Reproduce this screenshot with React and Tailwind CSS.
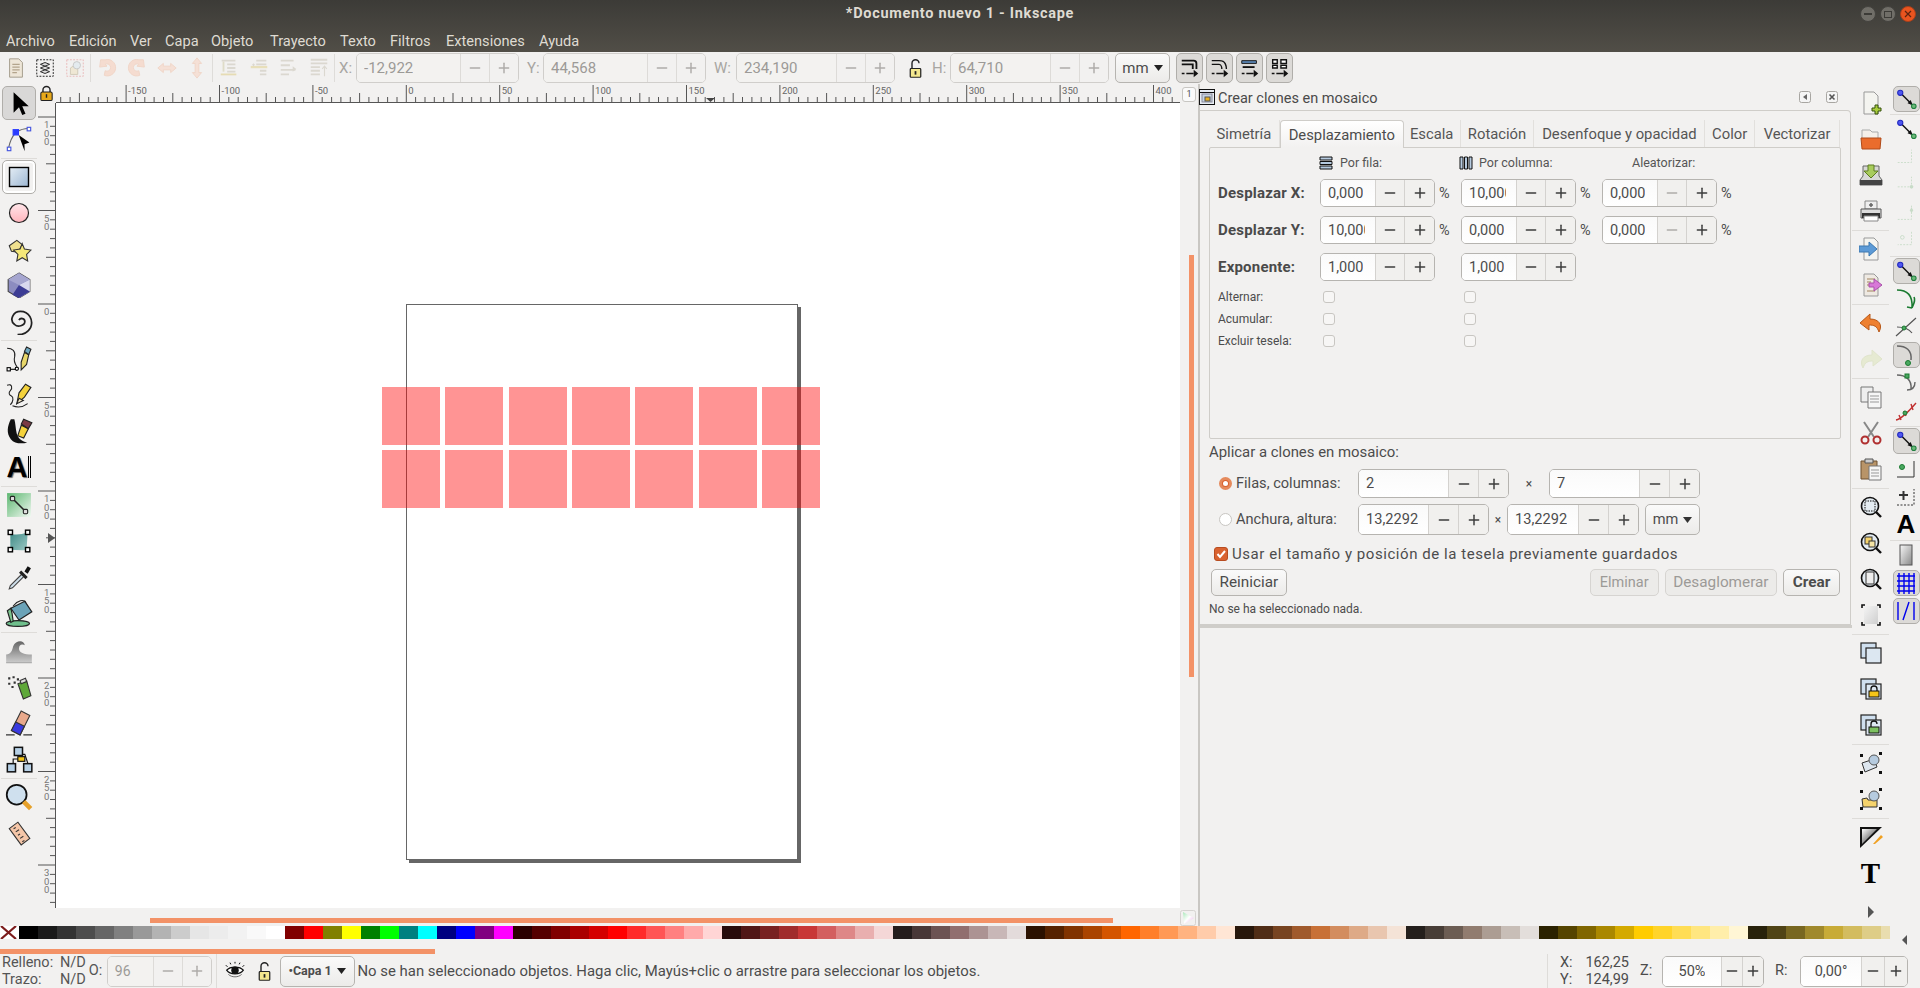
import { Minus, Plus } from "lucide-react";

const I = ({ s = 24, className = "", children }) => (
  <svg width={s} height={s} viewBox="0 0 24 24" className={className}>
    {children}
  </svg>
);

const Grad = ({ id, from, to, x2 = 1, y2 = 1 }) => (
  <defs>
    <linearGradient id={id} x1="0" y1="0" x2={x2} y2={y2}>
      <stop offset="0" stopColor={from} />
      <stop offset="1" stopColor={to} />
    </linearGradient>
  </defs>
);

const MENU = [
  ["Archivo", "w-[63px]"],
  ["Edición", "w-[61px]"],
  ["Ver", "w-[35px]"],
  ["Capa", "w-[46px]"],
  ["Objeto", "w-[59px]"],
  ["Trayecto", "w-[70px]"],
  ["Texto", "w-[50px]"],
  ["Filtros", "w-[56px]"],
  ["Extensiones", "w-[93px]"],
  ["Ayuda", "w-[50px]"],
];

const PALETTE = [
  "#000000", "#1a1a1a", "#333333", "#4d4d4d", "#666666", "#808080", "#999999", "#b3b3b3", "#cccccc", "#e6e6e6", "#ececec", "#f2f2f2", "#f9f9f9", "#ffffff",
  "#800000", "#ff0000", "#808000", "#ffff00", "#008000", "#00ff00", "#008080", "#00ffff", "#000080", "#0000ff", "#800080", "#ff00ff",
  "#2b0000", "#550000", "#800000", "#aa0000", "#d40000", "#ff0000", "#ff2a2a", "#ff5555", "#ff8080", "#ffaaaa", "#ffd5d5",
  "#280b0b", "#501616", "#782121", "#a02c2c", "#c83737", "#d35f5f", "#de8787", "#e9afaf", "#f4d7d7",
  "#241c1c", "#483737", "#6c5353", "#916f6f", "#ac9393", "#c8b7b7", "#e3dbdb",
  "#2b1100", "#552200", "#803300", "#aa4400", "#d45500", "#ff6600", "#ff7f2a", "#ff9955", "#ffb380", "#ffccaa", "#ffe6d5",
  "#28170b", "#502d16", "#784421", "#a05a2c", "#c87137", "#d38d5f", "#deaa87", "#e9c6af", "#f4e3d7",
  "#241f1c", "#483e37", "#6c5d53", "#917c6f", "#ac9d93", "#c8beb7", "#e3dedb",
  "#2b2200", "#554400", "#806600", "#aa8800", "#d4aa00", "#ffcc00", "#ffd42a", "#ffdd55", "#ffe680", "#ffeeaa", "#fff6d5",
  "#28220b", "#504416", "#786721", "#a0892c", "#c8ab37", "#d3bc5f", "#decd87", "#e9ddaf",
];

/* ---------- iconos de la barra superior ---------- */
const DocIcon = () => (
  <I s={22}>
    <path d="M5 2h10l4 4v16H5z" fill="#eee6d8" stroke="#a09888" />
    <path d="M8 8h8M8 11h8M8 14h8M8 17h5" stroke="#b3a48c" strokeWidth="1.5" />
  </I>
);
const SelectAllIcon = () => (
  <I s={22}>
    <rect x="3" y="3" width="18" height="18" fill="none" stroke="#111" strokeDasharray="2 1.5" />
    <path d="M7 8l5-2 5 2-5 2zM7 12l5-2 5 2-5 2zM7 16l5-2 5 2-5 2z" fill="#ddd" stroke="#222" strokeWidth="1" />
  </I>
);
const DimSelectIcon = () => (
  <I s={22}>
    <rect x="3" y="3" width="18" height="18" fill="none" stroke="#e9b7b7" strokeDasharray="2 1.5" />
    <path d="M7 19v-7l3-2h5v9z" fill="#efe7d4" stroke="#cfc8b6" />
    <circle cx="14" cy="9" r="4" fill="#e4ebef" stroke="#c6c6c6" />
  </I>
);
const RotLeft = ({ flip }) => (
  <I s={22} className={flip ? "-scale-x-100" : ""}>
    <path d="M10 3a9 9 0 1 1-1 17l1-5a4 4 0 1 0 0-7l2 2-8 1 1-8z" fill="#f5dcd0" stroke="#f0d4c6" />
  </I>
);
const FlipH = () => (
  <I s={22}>
    <path d="M2 12l6-5v3h8V7l6 5-6 5v-3H8v3z" fill="#f5e0d6" stroke="#f0d4c6" />
  </I>
);
const FlipV = () => (
  <I s={22}>
    <path d="M12 1l5 6h-3v10h3l-5 6-5-6h3V7H7z" fill="#f5e0d6" stroke="#f0d4c6" />
  </I>
);
const AlignA = () => (
  <I s={22}>
    <path d="M4 4h15M10 8h9M10 12h9M10 16h9" stroke="#dbd8d0" strokeWidth="2" />
    <path d="M6 5v11" stroke="#dfdcc8" strokeWidth="2" />
    <path d="M3 19h17" stroke="#e6dcb4" strokeWidth="2" />
  </I>
);
const AlignB = () => (
  <I s={22}>
    <path d="M9 4h11M9 8h11M13 15h7M13 19h7" stroke="#dbd8d0" strokeWidth="2" />
    <path d="M3 11h18" stroke="#e8dfba" strokeWidth="2.5" />
    <path d="M6 7v3M4.5 8.5h3" stroke="#dbd8d0" strokeWidth="1.2" />
  </I>
);
const AlignC = () => (
  <I s={22}>
    <path d="M3 4h14M3 9h10M3 14h16M3 19h9" stroke="#dbd8d0" strokeWidth="2" />
    <path d="M16 10l4 3-4 3z" fill="#dbd8d0" />
  </I>
);
const AlignD = () => (
  <I s={22}>
    <path d="M3 3h18M3 7h18M3 11h10M3 15h10M3 19h10" stroke="#dbd8d0" strokeWidth="2" />
    <path d="M18 21V10M15.5 13l2.5-3 2.5 3" stroke="#dbd8d0" strokeWidth="1.2" fill="none" />
  </I>
);
const LockClosed = ({ s = 20 }) => (
  <I s={s}>
    <path d="M7 11V7a5 5 0 0 1 10 0v4" fill="none" stroke="#222" strokeWidth="2" />
    <rect x="4" y="10" width="16" height="12" rx="2" fill="#e8a91a" stroke="#222" strokeWidth="1.5" />
    <rect x="11" y="13" width="2" height="5" fill="#222" />
  </I>
);
const LockOpen = ({ s = 20 }) => (
  <I s={s}>
    <path d="M8 12V6a4 4 0 0 1 8 0" fill="none" stroke="#222" strokeWidth="1.6" />
    <rect x="6" y="12" width="12" height="10" rx="1" fill="#f4e88e" stroke="#222" strokeWidth="1.4" />
    <rect x="11" y="15" width="2" height="4" fill="#222" />
  </I>
);
const SnapTop = ({ n }) => (
  <I s={22}>
    {n === 0 && <path d="M3 4h13a3 3 0 0 1 3 3v6M3 8h12v5" fill="none" stroke="#111" strokeWidth="2" />}
    {n === 1 && <path d="M3 4h8c6 0 6 2 7 4s1 3 1 5M3 8h8c2 0 3 3 3 5" fill="none" stroke="#111" strokeWidth="1.5" />}
    {n === 2 && (
      <>
        <path d="M3 4h16v3H3z" fill="#5b86b5" stroke="#111" strokeWidth="1" />
        <path d="M4 11h13" stroke="#111" strokeWidth="2" />
      </>
    )}
    {n === 3 && <path d="M4 3h5v4H4zM13 3h6v4h-6zM4 9h5v3H4zM13 9h6v3h-6z" fill="#fff" stroke="#111" strokeWidth="1.5" />}
    <path d="M3 18h3M8 18h8" stroke="#111" strokeWidth="1.5" />
    <path d="M16 14l5 4-5 4z" fill="#111" />
  </I>
);

/* ---------- herramientas (izquierda) ---------- */
const TOOLS = [
  [
    <I key="sel" s={26}><path d="M7 2v19l5-5 3 7 3-1-3-7h6z" fill="#000" /></I>,
    <I key="node" s={28}>
      <path d="M9 7C6 10 4 15 3 20M10 6c3-2 7-3 10-3" fill="none" stroke="#666" strokeWidth="1" />
      <rect x="7" y="4" width="4.5" height="4.5" fill="#2a3cff" stroke="#2a3cff" />
      <rect x="2" y="19" width="3" height="3" fill="#fff" stroke="#4858e0" />
      <rect x="19" y="2" width="3" height="3" fill="#fff" stroke="#4858e0" />
      <path d="M11 9l10 5-4 2 1 6z" transform="rotate(8 14 14)" fill="#000" />
    </I>,
  ],
  [
    <I key="rect" s={24}>
      <Grad id="gRect" from="#e4edf5" to="#9db7d2" />
      <rect x="2.5" y="2.5" width="19" height="19" fill="url(#gRect)" stroke="#000" strokeWidth="1.4" />
    </I>,
    <I key="circ" s={24}>
      <Grad id="gCirc" from="#ffe6ea" to="#ffb4bc" x2="0" />
      <circle cx="12" cy="12" r="9.5" fill="url(#gCirc)" stroke="#222" strokeWidth="1.2" />
    </I>,
    <I key="star" s={26}>
      <path d="M3 9l7-5 5 4-4 7-6-1z" fill="#efe08f" stroke="#333" />
      <path d="M15 7l2 5 6 1-4 4 1 6-5-3-5 3 1-6-4-4 6-1z" fill="#f5e878" stroke="#333" />
    </I>,
    <I key="box" s={26}>
      <path d="M12 1l10 6v11l-10 6-10-6V7z" fill="#8c8cc0" stroke="#444" />
      <path d="M12 12l10-5v11l-10 6z" fill="#d8d8ee" />
      <path d="M12 12l10 6-10 6-6-3z" fill="#3c3c94" />
      <path d="M2 7l10-6 10 6-10 5z" fill="#a6a6d0" />
    </I>,
    <I key="spiral" s={28}>
      <path d="M12 13c1-2 4-1 4 1 0 3-5 4-7 2-4-3-1-9 4-9 6 0 9 6 7 11-2 4-6 5-9 5" transform="translate(-3 -5) scale(1.25)" fill="none" stroke="#222" strokeWidth="1.2" />
    </I>,
  ],
  [
    <I key="pen" s={26}>
      <path d="M1 2c5 0 8 3 7 8-1 3 0 6 2 9" fill="none" stroke="#222" />
      <path d="M14 15l3-9 4 2-2 9-5 5z" fill="#e8d76a" stroke="#222" />
      <path d="M17 5l2-4 4 2-2 5z" fill="#6fa8c0" stroke="#222" />
      <rect x="1" y="20" width="3" height="3" fill="#fff" stroke="#000" />
      <circle cx="10" cy="21" r="1.5" fill="#fff" stroke="#000" />
      <path d="M4 21.5h5" stroke="#000" />
    </I>,
    <I key="pencil" s={26}>
      <path d="M1 3c5-2 5 3 3 5s-1 4 1 5 2 5-1 8" fill="none" stroke="#222" />
      <path d="M10 20l2-10 6-8 5 3-6 9z" fill="#f4d23c" stroke="#222" />
      <path d="M10 20l2-5 4 2z" fill="#f5e9c8" stroke="#222" />
      <path d="M6 22c5 2 10 1 14-2" fill="none" stroke="#222" />
    </I>,
    <I key="cal" s={28}>
      <path d="M5 2c-3 6-4 12 0 17 3 4 9 4 14 3-5-1-8-4-9-8S9 5 8 2z" fill="#111" />
      <path d="M11 16l3-9 6 3-4 8z" fill="#f4d23c" stroke="#222" />
      <path d="M14 6l2-4 7 3-3 5z" fill="#7b3a44" stroke="#222" />
    </I>,
    <div key="txt" className="flex items-center [font-family:'Liberation_Sans',sans-serif]">
      <span className="text-[29px] font-bold text-black leading-none [text-shadow:1px_1px_1px_#666]">A</span>
      <span className="w-[3px] h-[22px] border-x border-black ml-[1px]" />
    </div>,
  ],
  [
    <I key="grad" s={26}>
      <Grad id="gGrad" from="#5cb770" to="#f1f8f2" />
      <rect x="1" y="1" width="22" height="22" fill="url(#gGrad)" />
      <path d="M6 6l12 12" stroke="#222" strokeWidth="1.4" />
      <rect x="4" y="4" width="4" height="4" rx="1" fill="#ddd" stroke="#222" />
      <rect x="16" y="16" width="4" height="4" rx="1" fill="#ddd" stroke="#222" />
    </I>,
    <I key="mesh" s={26}>
      <Grad id="gMesh" from="#3f8a86" to="#9cc8c4" />
      <path d="M4 5c5 2 10 1 16-1l-1 16c-5 1-10 0-15 0z" fill="url(#gMesh)" />
      <rect x="2" y="2" width="4" height="4" fill="#fff" stroke="#000" strokeWidth="1.3" />
      <rect x="18" y="2" width="4" height="4" fill="#fff" stroke="#000" strokeWidth="1.3" />
      <rect x="2" y="18" width="4" height="4" fill="#fff" stroke="#000" strokeWidth="1.3" />
      <rect x="18" y="18" width="4" height="4" fill="#fff" stroke="#000" strokeWidth="1.3" />
    </I>,
    <I key="drop" s={26}>
      <path d="M15 9L4 20l-1 3 3-1L17 11" fill="#cfe0ec" stroke="#444" />
      <path d="M14 6l6 6-2 2-6-6z" fill="#222" />
      <path d="M17 7l3-5 3 2-3 5z" fill="#111" />
    </I>,
    <I key="bucket" s={28}>
      <ellipse cx="11" cy="21" rx="10" ry="2.5" fill="#6fbf8c" stroke="#222" />
      <path d="M5 8l12-6 6 9-11 7z" fill="#6ba3b8" stroke="#222" />
      <path d="M5 8l-3 2 3 10 2-1-1-7z" fill="#7cc48e" stroke="#222" />
      <path d="M7 6c4-5 9-6 11-3" fill="none" stroke="#222" />
    </I>,
  ],
  [
    <I key="tweak" s={28}>
      <Grad id="gTw" from="#666" to="#ccc" x2="0" />
      <path d="M1 22v-7c4 0 5-3 6-7 2-5 9-6 10-1-2-1-5-1-5 3 0 3 4 5 11 5v7z" fill="url(#gTw)" />
      <path d="M1 22h22" stroke="#aaa" />
    </I>,
    <I key="spray" s={26}>
      <path d="M11 9l8-3 4 14-7 3z" fill="#5fa83a" stroke="#333" />
      <path d="M13 6l5-2 1 3-5 2z" fill="#ddd" stroke="#333" />
      <path d="M2 3h2v2H2zM6 2h2v2H6zM2 8h2v2H2zM7 7h2v2H7zM10 4h2v2h-2zM5 11h2v2H5z" fill="#333" />
    </I>,
    <I key="erase" s={26}>
      <path d="M14 1l8 4-9 18-8-4z" fill="#e8a98c" stroke="#333" />
      <path d="M9 11l8 4-4 8-8-4z" fill="#3a3ae0" stroke="#333" />
      <path d="M0 23h8M16 23h8" stroke="#333" strokeWidth="1.2" />
    </I>,
    <I key="conn" s={28}>
      <path d="M7 17v-5h5M13 8h4l3 9" fill="none" stroke="#111" />
      <rect x="8" y="2" width="7" height="7" fill="#b6d0e6" stroke="#111" strokeWidth="1.3" />
      <rect x="11" y="10" width="6" height="4" fill="#f5c518" stroke="#111" />
      <rect x="2" y="16" width="7" height="7" fill="#b6d0e6" stroke="#111" strokeWidth="1.3" />
      <rect x="16" y="16" width="7" height="7" fill="#b6d0e6" stroke="#111" strokeWidth="1.3" />
    </I>,
  ],
  [
    <I key="zoom" s={28}>
      <circle cx="10" cy="10" r="8.5" fill="#cfe0ee" stroke="#111" strokeWidth="1.5" />
      <path d="M16 16l6 6" stroke="#e6a12a" strokeWidth="4" />
    </I>,
    <I key="meas" s={26}>
      <path d="M3 8l8-6 11 15-8 6z" fill="#f5c6a8" stroke="#333" />
      <path d="M7 8l2-1M9 11l3-2M11 14l2-1M13 17l3-2M15 20l2-1" stroke="#333" />
    </I>,
  ],
];

/* ---------- comandos (derecha) ---------- */
const Page = ({ children, fill = "#f4f4f0" }) => (
  <>
    <path d="M5 1h10l4 4v18H5z" fill={fill} stroke="#999" />
    {children}
  </>
);
const ZoomBase = ({ children }) => (
  <>
    <circle cx="11" cy="11" r="8.5" fill="#e4ecf2" stroke="#111" strokeWidth="1.6" />
    {children}
    <path d="M17 17l5 5" stroke="#111" strokeWidth="2.4" />
  </>
);
const CloneBase = ({ children }) => (
  <>
    <rect x="2" y="2" width="15" height="15" fill="#cfdfee" stroke="#222" strokeWidth="1.2" />
    <rect x="7" y="7" width="15" height="15" fill="#dce7f1" stroke="#222" strokeWidth="1.2" />
    {children}
  </>
);
const COMMANDS = [
  [
    <I key="new"><Page /><path d="M16 14h3v3h3v3h-3v3h-3v-3h-3v-3h3z" fill="#a8cc3c" stroke="#34500c" /></I>,
    <I key="open">
      <path d="M3 3h8l2 2h6v8H3z" fill="#f5f0ea" stroke="#aaa" />
      <path d="M2 11h20l-1 11H3z" fill="#ea6c2c" stroke="#b04a18" />
    </I>,
    <I key="save">
      <path d="M4 3h16v10l3 4v5H1v-5l3-4z" fill="#d8d8d6" stroke="#666" />
      <rect x="1" y="17" width="22" height="5" fill="#444" />
      <path d="M9 2h6v6h4l-7 7-7-7h4z" fill="#a8cc5c" stroke="#5c7c20" />
    </I>,
    <I key="print">
      <path d="M6 2h12v8H6z" fill="#eee" stroke="#888" />
      <path d="M2 10h20v9H2z" fill="#ddd" stroke="#555" />
      <path d="M3 14h18v5H3z" fill="#333" />
      <path d="M5 17h14v5H5z" fill="#fff" stroke="#888" />
      <path d="M10 6h4M12 4v4" stroke="#666" strokeWidth="1.5" />
    </I>,
  ],
  [
    <I key="imp"><Page /><path d="M0 9h10V5l8 7-8 7v-4H0z" fill="#5c9ad6" stroke="#3c78b0" /></I>,
    <I key="exp">
      <Page fill="#eee9e2" />
      <path d="M8 6h8M8 9h4M8 12h4M8 18h8" stroke="#c8b6a0" strokeWidth="2" />
      <path d="M10 10h5V6l8 6-8 6v-4h-5z" fill="#d878d8" stroke="#a850a8" />
    </I>,
  ],
  [
    <I key="undo"><path d="M11 3L1 12l9 7v-5c5 0 8 1 10 7 4-7 0-13-9-13z" fill="#ee8030" stroke="#b85818" strokeLinejoin="round" /></I>,
    <I key="redo" className="-scale-x-100"><path d="M11 3L1 12l9 7v-5c5 0 8 1 10 7 4-7 0-13-9-13z" fill="#e6ead2" stroke="#e0e4cc" /></I>,
  ],
  [
    <I key="copy">
      <path d="M2 2h12v15H2z" fill="#eee" stroke="#777" />
      <path d="M9 7h13v16H9z" fill="#f6f6f6" stroke="#777" />
      <path d="M11 11h9M11 14h9M11 17h9" stroke="#999" />
    </I>,
    <I key="cut">
      <path d="M5 1l10 15M19 1L9 16" stroke="#888" strokeWidth="2" />
      <circle cx="6" cy="19" r="3.5" fill="none" stroke="#b03030" strokeWidth="2" />
      <circle cx="18" cy="19" r="3.5" fill="none" stroke="#b03030" strokeWidth="2" />
    </I>,
    <I key="paste">
      <path d="M2 4h16v18H2z" fill="#b89468" stroke="#6c5030" />
      <path d="M6 2h8v4H6z" fill="#ccc" stroke="#555" />
      <path d="M10 9h12v14H10z" fill="#f6f6f6" stroke="#777" />
      <path d="M12 13h8M12 16h8M12 19h8" stroke="#999" />
    </I>,
  ],
  [
    <I key="zs"><ZoomBase><rect x="6" y="6" width="10" height="10" fill="none" stroke="#111" strokeDasharray="1.5 1" /></ZoomBase></I>,
    <I key="zd"><ZoomBase><rect x="6" y="6" width="7" height="7" fill="#f5d36c" stroke="#333" /><rect x="10" y="10" width="6" height="6" fill="#f5e4a4" stroke="#333" /></ZoomBase></I>,
    <I key="zp"><ZoomBase><rect x="7" y="5" width="8" height="12" fill="#eee" stroke="#333" /></ZoomBase></I>,
    <I key="zw">
      <Grad id="gZw" from="#f4f4f4" to="#cfcfcf" />
      <rect x="5" y="3" width="14" height="18" fill="url(#gZw)" />
      <path d="M3 5V2h3M18 2h3v3M3 19v3h3M18 22h3v-3" fill="none" stroke="#111" strokeWidth="1.6" />
    </I>,
  ],
  [
    <I key="c1"><CloneBase /></I>,
    <I key="c2">
      <CloneBase>
        <path d="M12 14v-2a3 3 0 0 1 6 0v2" fill="none" stroke="#111" strokeWidth="1.3" />
        <rect x="10" y="14" width="10" height="6" fill="#f5c518" stroke="#111" />
      </CloneBase>
    </I>,
    <I key="c3">
      <CloneBase>
        <path d="M12 14v-3a3 3 0 0 1 6 0" fill="none" stroke="#111" strokeWidth="1.3" />
        <rect x="10" y="14" width="10" height="6" fill="#7cc060" stroke="#111" />
      </CloneBase>
    </I>,
  ],
  [
    <I key="g1">
      <path d="M3 12l12-4 3 8-12 5z" fill="#dde6ef" stroke="#333" />
      <circle cx="15" cy="9" r="5" fill="#b6cbdf" stroke="#555" />
      <path d="M1 3h3v3H1zM20 1h3v3h-3zM1 20h3v3H1zM20 20h3v3h-3z" fill="#111" />
    </I>,
    <I key="g2">
      <path d="M3 12l5-1 1 2h9v7H4z" fill="#f5d36c" stroke="#333" />
      <circle cx="15" cy="9" r="5" fill="#b6cbdf" stroke="#555" />
      <path d="M1 3h3v3H1zM20 1h3v3h-3zM1 20h3v3H1zM20 20h3v3h-3z" fill="#111" />
    </I>,
  ],
  [
    <I key="xml">
      <Grad id="gXml" from="#fff" to="#222" />
      <path d="M1 2h22L1 23z" fill="#111" />
      <path d="M3 4h15L3 19z" fill="url(#gXml)" />
      <path d="M14 19l8-9 2 2-8 7z" fill="#f0a020" />
    </I>,
    <span key="T" className="text-[29px] font-bold text-black leading-none [font-family:'Liberation_Serif',serif]">T</span>,
  ],
];

/* ---------- snap (derecha del todo) ---------- */
const SnapNode = () => (
  <I s={26}>
    <path d="M7 7l10 10" stroke="#111" strokeWidth="1.4" />
    <path d="M13 16l5 2-2-5z" fill="#111" />
    <circle cx="6" cy="6" r="2.5" fill="#5058f0" stroke="#2028c0" />
    <circle cx="19" cy="19" r="2.2" fill="#6cb878" stroke="#208040" />
  </I>
);
const DIM = "#c8dcc8";
const SNAP = [
  [[<SnapNode key="a" />, true]],
  [
    [<SnapNode key="b" />],
    [<I key="c" s={22}><path d="M3 18h15V4" fill="none" stroke={DIM} strokeDasharray="2 1.5" /></I>],
    [<I key="d" s={22}><path d="M3 14h15V3" fill="none" stroke={DIM} strokeDasharray="2 1.5" /><circle cx="18" cy="14" r="2" fill={DIM} /></I>],
    [<I key="e" s={22}><path d="M3 19h15V4" fill="none" stroke={DIM} strokeDasharray="2 1.5" /><path d="M18 6l2 3-2 3-2-3z" fill={DIM} /></I>],
    [<I key="f" s={22}><path d="M18 2v14H3" fill="none" stroke={DIM} strokeDasharray="2 1.5" /><circle cx="8" cy="8" r="2" fill="none" stroke={DIM} /></I>],
  ],
  [
    [<SnapNode key="g" />, true],
    [<I key="h" s={24}><path d="M3 3c10 0 16 5 15 18M20 10c2 4-1 8-2 11M13 20l5 1" fill="none" stroke="#1a7a30" strokeWidth="1.6" /></I>],
    [<I key="i" s={24}><path d="M2 21L22 3M3 12c6 0 12 2 15 6" fill="none" stroke="#555" strokeWidth="1.2" /><circle cx="10" cy="13" r="2" fill="#4aa860" stroke="#1a7a30" /></I>],
    [<I key="j" s={24}><path d="M3 3c9 0 15 4 14 14" fill="none" stroke="#666" strokeWidth="1.5" /><circle cx="14" cy="20" r="2.5" fill="#4aa860" stroke="#1a7a30" /></I>, true],
    [<I key="k" s={24}><path d="M3 4c9 0 15 5 14 14M21 11c0 5-3 8-8 8" fill="none" stroke="#666" strokeWidth="1.4" /><rect x="11" y="3" width="4" height="4" fill="#4aa860" stroke="#1a7a30" /></I>],
    [<I key="l" s={24}><path d="M2 21c5-1 14-10 20-17M5 16l2 5M10 12l2 5M17 5l2 6" fill="none" stroke="#c03030" strokeWidth="1.4" /><circle cx="11" cy="14" r="2" fill="#4aa860" stroke="#1a7a30" /></I>],
  ],
  [
    [<SnapNode key="m" />, true],
    [<I key="n" s={24}><path d="M3 20h17V4" fill="none" stroke="#333" /><circle cx="8" cy="10" r="2.5" fill="#4aa860" stroke="#1a7a30" /></I>],
    [<I key="o" s={24}><path d="M3 20h17V4" fill="none" stroke="#333" strokeDasharray="2 1.5" /><path d="M5 10h9M9.5 6v9" stroke="#333" strokeWidth="2" /></I>],
    [<div key="p" className="relative"><span className="text-[26px] font-bold text-black leading-none [font-family:'Liberation_Sans',sans-serif]">A</span></div>],
  ],
  [
    [<I key="q" s={24}><Grad id="gPg" from="#f8f8f8" to="#888" /><rect x="6" y="2" width="12" height="20" fill="url(#gPg)" stroke="#555" /></I>],
    [<I key="r" s={24}><path d="M3 5h18M3 10h18M3 15h18M3 20h18M5 2v21M10 2v21M15 2v21M20 2v21" stroke="#0000ee" strokeWidth="1.4" /></I>, true],
    [<I key="s" s={24}><path d="M4 3v18M20 3v18M9 21l6-18" stroke="#0000ee" strokeWidth="1.4" /></I>, true],
  ],
];

/* ---------- widgets ---------- */
function Spin({ value, w, inp = "flex-1", btn = "w-[30px]", clip, disabled, dimMinus, center, h = "h-full" }) {
  return (
    <div
      className={`${w} ${h} flex shrink-0 rounded-[5px] border overflow-hidden ${
        disabled ? "border-[#d0cecb] text-[#9c9a97]" : "border-[#b6b4b0] text-[#4c4c4c]"
      }`}
    >
      <div
        className={`${inp} flex items-center pt-[1px] ${center ? "justify-center" : "pl-[7px]"} ${
          disabled ? "bg-[#f3f2f0]" : "bg-gradient-to-b from-[#fafafa] to-white"
        }`}
      >
        <span className={`${clip ? "w-[37px]" : ""} overflow-hidden whitespace-nowrap`}>{value}</span>
      </div>
      <div className={`${btn} flex items-center justify-center border-l ${disabled ? "border-[#dddbd8] bg-[#f2f1f0]" : "border-[#d4d2cf] bg-[#f1f0ee]"}`}>
        <Minus size={16} strokeWidth={2.2} className={disabled || dimMinus ? "text-[#aeaca9]" : "text-[#3c3c3c]"} />
      </div>
      <div className={`${btn} flex items-center justify-center border-l ${disabled ? "border-[#dddbd8] bg-[#f2f1f0]" : "border-[#d4d2cf] bg-[#f1f0ee]"}`}>
        <Plus size={16} strokeWidth={2.2} className={disabled ? "text-[#aeaca9]" : "text-[#3c3c3c]"} />
      </div>
    </div>
  );
}

const Check = () => <span className="w-[12px] h-[12px] rounded-[3px] border border-[#c8c6c2] bg-[#f7f6f5] shrink-0" />;

function TopField({ label, labelW, value, w }) {
  return (
    <div className="flex items-center h-full">
      <span className={`${labelW} text-[#a8a6a2] pt-[1px]`}>{label}</span>
      <Spin value={value} w={w} disabled inp="flex-1" btn="w-[29px]" />
    </div>
  );
}

function SpinRow({ label, a, b, c }) {
  return (
    <div className="flex items-center h-[28px] pl-[8px] text-[14.5px]">
      <span className="w-[102px] pt-[1px] font-bold text-[15px] text-[#4a4a4a] tracking-[0.2px]">{label}</span>
      <Spin value={a[0]} clip={a[1]} w="w-[115px]" inp="w-[54px]" />
      <span className={`w-[26px] pl-[4px] pt-[1px] ${b ? "" : "invisible"}`}>%</span>
      <Spin value={b ? b[0] : "1,000"} clip={b && b[1]} w="w-[115px]" inp="w-[54px]" />
      {c && <span className="w-[26px] pl-[4px] pt-[1px]">%</span>}
      {c && <Spin value={c} w="w-[115px]" inp="w-[54px]" dimMinus />}
      {c && <span className="pl-[4px] pt-[1px]">%</span>}
    </div>
  );
}

function CheckRow({ label }) {
  return (
    <div className="flex items-center h-[22px] pl-[8px] text-[12px]">
      <span className="w-[105px]">{label}</span>
      <Check />
      <span className="w-[129px]" />
      <Check />
    </div>
  );
}

function Rulers() {
  const ticks = [];
  for (let u = -185; u <= 415; u += 5) {
    const x = (406.3 - 56 + u * 1.868).toFixed(1);
    const h = u % 50 === 0 ? 17 : u % 25 === 0 ? 9 : 5;
    ticks.push(<path key={u} d={`M${x} 18V${18 - h}`} stroke="#555" />);
    if (u % 50 === 0)
      ticks.push(
        <text key={`t${u}`} x={+x + 2} y="10" fontSize="9.5" fill="#666">
          {u}
        </text>
      );
  }
  return (
    <svg width="1124" height="19" className="block">
      <path d="M0 18.5H1124" stroke="#555" />
      {ticks}
      <path d="M650 14h9l-4.5 4z" fill="#444" />
    </svg>
  );
}

function VRuler() {
  const ticks = [];
  for (let u = -100; u <= 325; u += 5) {
    const y = (304 - 103 + u * 1.87).toFixed(1);
    const w = u % 50 === 0 ? 17 : u % 25 === 0 ? 9 : 5;
    ticks.push(<path key={u} d={`M17 ${y}H${17 - w}`} stroke="#555" />);
    if (u % 50 === 0)
      String(Math.abs(u))
        .split("")
        .forEach((d, i) =>
          ticks.push(
            <text key={`${u}-${i}`} x="6" y={+y + 11 + i * 8.5} fontSize="9.5" fill="#777">
              {d}
            </text>
          )
        );
  }
  return (
    <svg width="18" height="805" className="block shrink-0">
      <path d="M17.5 0V805" stroke="#555" />
      {ticks}
      <path d="M10 430l7 5-7 5z" fill="#555" />
    </svg>
  );
}

function Canvas() {
  const cols = [0, 1, 2, 3, 4, 5, 6];
  const rows = [0, 1];
  return (
    <div className="relative w-[1124px] h-[805px] bg-white overflow-hidden">
      <div className="absolute left-[350px] top-[201px] w-[392px] h-[556px] bg-white border border-[#666] shadow-[3px_3px_0_#666]" />
      {rows.map((r) =>
        cols.map((c) => (
          <div
            key={`${r}-${c}`}
            className="absolute w-[58px] h-[58px] bg-[#ff0000]/42"
            style={{ left: 326 + c * 63.3, top: 284 + r * 63.3 }}
          />
        ))
      )}
    </div>
  );
}

function ToolColumn({ groups, className, itemH = "h-[36px]" }) {
  return (
    <div className={className}>
      {groups.map((g, i) => (
        <div key={i}>
          {g.map((ic, j) => (
            <div key={j} className={`${itemH} flex items-center justify-center`}>
              {ic}
            </div>
          ))}
          {i < groups.length - 1 && <div className="h-[2px] mx-[1px] border-b border-[#dedcd9]" />}
        </div>
      ))}
    </div>
  );
}

const TABS = [
  ["Simetría", "w-[71px]"],
  ["Desplazamiento", "w-[124px]"],
  ["Escala", "w-[57px]"],
  ["Rotación", "w-[74px]"],
  ["Desenfoque y opacidad", "w-[171px]"],
  ["Color", "w-[50px]"],
  ["Vectorizar", "w-[85px]"],
];

function Dialog() {
  return (
    <div className="w-[653px] shrink-0 flex flex-col border-l-2 border-[#c9c7c3]">
      <div className="h-[26px] flex items-center">
        <svg width="16" height="16" viewBox="0 0 16 16" className="ml-[-1px] mr-[1px]">
          <rect x="0.5" y="0.5" width="15" height="15" fill="#e8eef4" stroke="#111" />
          <path d="M1 3.5h14" stroke="#111" />
          <rect x="3" y="5" width="10" height="8" fill="#c6d4e2" stroke="#889" />
          <rect x="6" y="8" width="5" height="4" fill="#e8b020" stroke="#555" />
        </svg>
        <span className="ml-[2px] pt-[3px] text-[#4a4a4a] text-[14.5px]">Crear clones en mosaico</span>
        <svg width="12" height="12" className="ml-[421px]">
          <rect x="0.5" y="0.5" width="11" height="11" rx="2" fill="#f5f5f5" stroke="#a8a6a2" />
          <path d="M8 3v6L4 6z" fill="#666" />
        </svg>
        <svg width="12" height="12" className="ml-[15px]">
          <rect x="0.5" y="0.5" width="11" height="11" rx="2" fill="#f5f5f5" stroke="#a8a6a2" />
          <path d="M3.5 3.5l5 5M8.5 3.5l-5 5" stroke="#555" strokeWidth="1.6" />
        </svg>
      </div>
      <div className="h-[515px] border border-[#cfcdc9] border-l-0 rounded-tr-[4px] pl-[9px] pr-[10px] pt-[9px] text-[#4c4c4c]">
        <div className="flex h-[27px]">
          {TABS.map(([t, w], i) => (
            <div
              key={t}
              className={`${w} flex items-center justify-center pt-[1px] text-[14.8px] whitespace-nowrap ${
                i === 1
                  ? "border border-b-0 border-[#cfcdc9] rounded-t-[4px] z-10 h-[28px] bg-gradient-to-b from-white to-[#f2f1f0]"
                  : "border-r border-[#e2e0dd] text-[#555]"
              }`}
            >
              {t}
            </div>
          ))}
        </div>
        <div className="h-[292px] w-[632px] border border-[#cfcdc9] rounded-[2px]">
          <div className="flex items-center h-[20px] mt-[5px] text-[12.5px] text-[#555]">
            <svg width="14" height="14" viewBox="0 0 14 14" className="ml-[109px]">
              <path d="M1 1h12v3H1zM1 5.5h12v3H1zM1 10h12v3H1z" fill="#b7cbe0" stroke="#111" strokeWidth="1" />
            </svg>
            <span className="ml-[7px] w-[119px]">Por fila:</span>
            <svg width="14" height="14" viewBox="0 0 14 14">
              <path d="M1 1h3v12H1zM5.5 1h3v12h-3zM10 1h3v12h-3z" fill="#b7cbe0" stroke="#111" strokeWidth="1" />
            </svg>
            <span className="ml-[6px] w-[153px]">Por columna:</span>
            <span>Aleatorizar:</span>
          </div>
          <div className="mt-[6px]">
            <SpinRow label="Desplazar X:" a={["0,000"]} b={["10,000", true]} c="0,000" />
          </div>
          <div className="mt-[9px]">
            <SpinRow label="Desplazar Y:" a={["10,000", true]} b={["0,000"]} c="0,000" />
          </div>
          <div className="mt-[9px]">
            <SpinRow label="Exponente:" a={["1,000"]} />
          </div>
          <div className="mt-[5px]">
            <CheckRow label="Alternar:" />
            <CheckRow label="Acumular:" />
            <CheckRow label="Excluir tesela:" />
          </div>
        </div>
        <div className="h-[20px] mt-[3px] flex items-center text-[14.9px]">Aplicar a clones en mosaico:</div>
        <div className="h-[29px] mt-[7px] flex items-center text-[14.6px]">
          <span className="ml-[10px] w-[13px] h-[13px] rounded-full bg-[#d9622f] border-[3px] border-[#e58a5c] shrink-0 flex items-center justify-center">
            <span className="w-[5px] h-[5px] rounded-full bg-white" />
          </span>
          <span className="ml-[4px] w-[122px] whitespace-nowrap">Filas, columnas:</span>
          <Spin value="2" w="w-[151px]" />
          <span className="w-[40px] text-center text-[12px]">×</span>
          <Spin value="7" w="w-[151px]" />
        </div>
        <div className="h-[31px] mt-[6px] flex items-center text-[14.6px]">
          <span className="ml-[10px] w-[13px] h-[13px] rounded-full bg-white border border-[#c8c6c2] shrink-0" />
          <span className="ml-[4px] w-[122px] whitespace-nowrap">Anchura, altura:</span>
          <Spin value="13,2292" w="w-[131px]" />
          <span className="w-[18px] text-center text-[12px]">×</span>
          <Spin value="13,2292" w="w-[132px]" />
          <div className="ml-[6px] w-[55px] h-full rounded-[5px] border border-[#b6b4b0] bg-gradient-to-b from-[#fafafa] to-[#ecebe9] flex items-center justify-center gap-[5px]">
            mm
            <svg width="9" height="6"><path d="M0 0h9L4.5 6z" fill="#333" /></svg>
          </div>
        </div>
        <div className="h-[20px] mt-[9px] flex items-center text-[15px]">
          <span className="ml-[5px] w-[14px] h-[14px] rounded-[3px] bg-[#d9622f] border border-[#b84c20] flex items-center justify-center shrink-0">
            <svg width="10" height="10" viewBox="0 0 10 10"><path d="M1.5 5l2.5 3 5-6" fill="none" stroke="#fff" strokeWidth="2" /></svg>
          </span>
          <span className="ml-[4px] tracking-[0.55px] whitespace-nowrap">Usar el tamaño y posición de la tesela previamente guardados</span>
        </div>
        <div className="h-[27px] mt-[5px] flex text-[15.3px]">
          <div className="ml-[2px] w-[76px] rounded-[5px] border border-[#b6b4b0] bg-gradient-to-b from-[#fafafa] to-[#ecebe9] flex items-center justify-center">
            Reiniciar
          </div>
          <div className="ml-[303px] w-[69px] rounded-[5px] border border-[#d6d4d1] bg-[#ecebe9] text-[#9c9a97] text-[14.5px] flex items-center justify-center">
            Elminar
          </div>
          <div className="ml-[6px] w-[113px] rounded-[5px] border border-[#d6d4d1] bg-[#ecebe9] text-[#9c9a97] flex items-center justify-center">
            Desaglomerar
          </div>
          <div className="ml-[6px] w-[57px] rounded-[5px] border border-[#b6b4b0] bg-gradient-to-b from-[#fafafa] to-[#ecebe9] font-bold flex items-center justify-center">
            Crear
          </div>
        </div>
        <div className="h-[16px] mt-[5px] flex items-center text-[12px]">No se ha seleccionado nada.</div>
      </div>
      <div className="h-[3px] bg-[#cfcdc9] -mr-[1px]" />
    </div>
  );
}

export default function App() {
  return (
    <div className="w-[1920px] h-[988px] overflow-hidden flex flex-col bg-[#f2f1f0] text-[#4c4c4c] text-[14px] [font-family:Roboto,sans-serif]">
      {/* barra de titulo + menu */}
      <div className="h-[52px] shrink-0 bg-gradient-to-b from-[#3c3b37] to-[#514e47] text-[#dfdbd2] flex flex-col">
        <div className="h-[28px] flex items-center relative">
          <span className="w-full text-center font-bold text-[14.5px] tracking-[0.7px]">*Documento nuevo 1 - Inkscape</span>
          <div className="absolute right-[4px] top-[6px] flex gap-[4px]">
            <span className="w-[16px] h-[16px] rounded-full bg-[#706e68] border border-[#44433f] flex items-center justify-center">
              <span className="w-[8px] h-[1.5px] bg-[#3c3b37]" />
            </span>
            <span className="w-[16px] h-[16px] rounded-full bg-[#706e68] border border-[#44433f] flex items-center justify-center">
              <span className="w-[8px] h-[7px] border border-[#3c3b37]" />
            </span>
            <span className="w-[16px] h-[16px] rounded-full bg-[#e9541f] border border-[#a8401c] flex items-center justify-center">
              <svg width="8" height="8"><path d="M1 1l6 6M7 1l-6 6" stroke="#5c2410" strokeWidth="1.2" /></svg>
            </span>
          </div>
        </div>
        <div className="flex items-center h-[24px] pl-[6px] pt-[3px] text-[14.6px]">
          {MENU.map(([m, w]) => (
            <span key={m} className={w}>
              {m}
            </span>
          ))}
        </div>
      </div>

      {/* barra de controles */}
      <div className="h-[32px] shrink-0 flex items-center">
        <div className="w-[29px] flex justify-center ml-[1px]"><DocIcon /></div>
        <div className="w-[30px] flex justify-center"><SelectAllIcon /></div>
        <div className="w-[30px] flex justify-center"><DimSelectIcon /></div>
        <div className="w-px h-[28px] bg-[#dedcd9]" />
        <div className="w-[30px] ml-[1px] flex justify-center"><RotLeft /></div>
        <div className="w-[30px] flex justify-center"><RotLeft flip /></div>
        <div className="w-[30px] flex justify-center"><FlipH /></div>
        <div className="w-[30px] flex justify-center"><FlipV /></div>
        <div className="w-px h-[28px] bg-[#dedcd9]" />
        <div className="w-[30px] ml-[1px] flex justify-center"><AlignA /></div>
        <div className="w-[30px] flex justify-center"><AlignB /></div>
        <div className="w-[30px] flex justify-center"><AlignC /></div>
        <div className="w-[30px] flex justify-center"><AlignD /></div>
        <div className="w-px h-[28px] bg-[#dedcd9]" />
        <div className="h-[30px] flex items-center ml-[4px] text-[15px]">
          <TopField label="X:" labelW="w-[17px]" value="-12,922" w="w-[163px]" />
          <div className="w-[8px]" />
          <TopField label="Y:" labelW="w-[16px]" value="44,568" w="w-[163px]" />
          <div className="w-[8px]" />
          <TopField label="W:" labelW="w-[22px]" value="234,190" w="w-[159px]" />
          <div className="w-[37px] flex justify-center pl-[3px]"><LockOpen s={21} /></div>
          <TopField label="H:" labelW="w-[18px]" value="64,710" w="w-[159px]" />
          <div className="ml-[6px] w-[55px] h-full rounded-[5px] border border-[#b6b4b0] bg-gradient-to-b from-[#fafafa] to-[#ecebe9] flex items-center justify-center gap-[5px] text-[#4c4c4c]">
            mm
            <svg width="9" height="6"><path d="M0 0h9L4.5 6z" fill="#222" /></svg>
          </div>
          <div className="ml-[6px] flex gap-[3px] h-full">
            {[0, 1, 2, 3].map((n) => (
              <div key={n} className="w-[27px] h-full rounded-[5px] border border-[#b0aeaa] bg-[#dcdad7] flex items-center justify-center">
                <SnapTop n={n} />
              </div>
            ))}
          </div>
        </div>
      </div>

      {/* zona principal */}
      <div className="h-[842px] shrink-0 flex">
        <div className="w-[38px] shrink-0 relative">
          <ToolColumn groups={TOOLS} className="pt-[1px]" />
          {/* botones activos por encima del icono */}
          <div className="absolute left-[2px] top-[2px] w-[34px] h-[34px] rounded-[5px] border border-[#b0aeaa] bg-[#000]/10" />
          <div className="absolute left-[2px] top-[76px] w-[34px] h-[34px] rounded-[5px] border border-[#b0aeaa] shadow-[inset_0_0_0_2px_#fff]" />
        </div>

        <div className="w-[1160px] shrink-0 flex flex-col">
          <div className="h-[19px] flex">
            <div className="w-[18px] flex items-start pt-[1px]"><LockClosed s={17} /></div>
            <Rulers />
            <div className="flex-1 pl-[2px] pt-[3px]">
              <div className="w-[14px] h-[15px] rounded-[3px] border border-[#c8c6c2] bg-[#fafafa] flex items-center justify-center text-[9px] leading-none">1</div>
            </div>
          </div>
          <div className="h-[805px] flex">
            <VRuler />
            <Canvas />
            <div className="w-[18px] pt-[152px] pl-[9px]">
              <div className="w-[5px] h-[422px] bg-[#f39267]" />
            </div>
          </div>
          <div className="h-[18px] flex items-start">
            <div className="ml-[112px] mt-[10px] w-[963px] h-[5px] bg-[#f39267]" />
            <svg width="16" height="16" viewBox="0 0 16 16" className="ml-[67px] mt-[2px]">
              <defs>
                <linearGradient id="gWheel" x1="0" y1="0" x2="1" y2="1">
                  <stop offset="0" stopColor="#a8e8b8" />
                  <stop offset="0.5" stopColor="#ffffff" />
                  <stop offset="1" stopColor="#e8a8e8" />
                </linearGradient>
              </defs>
              <rect x="0.5" y="0.5" width="15" height="15" rx="2" fill="#f2f1f0" stroke="#d5d3d0" />
              <path d="M3 2l11 6-10 6z" fill="url(#gWheel)" />
            </svg>
          </div>
        </div>

        <Dialog />

        <div className="w-[39px] shrink-0">
          <ToolColumn groups={COMMANDS} className="pt-[1px]" />
          <div className="mt-[15px] flex justify-center">
            <svg width="6" height="12"><path d="M0 0l6 6-6 6z" fill="#555" /></svg>
          </div>
        </div>

        <div className="w-[30px] shrink-0 pt-[1px]">
          {SNAP.map((g, i) => (
            <div key={i}>
              {g.map(([ic, on], j) => (
                <div key={j} className="h-[28px] flex items-center justify-center">
                  <div className={`w-[27px] h-[26px] ml-[2px] flex items-center justify-center rounded-[5px] border ${on ? "border-[#b0aeaa] bg-[#dcdad7]" : "border-transparent"}`}>
                    {ic}
                  </div>
                </div>
              ))}
              {i < SNAP.length - 1 && <div className="h-[2px] border-b border-[#dedcd9]" />}
            </div>
          ))}
        </div>
      </div>

      {/* paleta */}
      <div className="h-[13px] shrink-0 flex">
        <svg width="19" height="13" className="shrink-0">
          <rect width="19" height="13" fill="#fff" />
          <path d="M1 0l15 13M16 0L1 13" stroke="#7c1c1c" strokeWidth="2.2" />
        </svg>
        <div className="w-[1871px] shrink-0 flex overflow-hidden">
          {PALETTE.map((c, i) => (
            <div key={i} className="w-[19px] shrink-0" style={{ background: c }} />
          ))}
        </div>
        <div className="flex-1 flex justify-end items-end pr-[13px]">
          <svg width="5" height="10" className="overflow-visible translate-y-[6px]"><path d="M5 0v10L0 5z" fill="#555" /></svg>
        </div>
      </div>

      <div className="h-[10px] shrink-0" />
      <div className="h-[5px] w-[435px] shrink-0 bg-[#f39267]" />

      {/* barra de estado */}
      <div className="h-[34px] shrink-0 flex items-center">
        <div className="w-[89px] pl-[2px] flex flex-col leading-[17px] text-[#555] text-[14.5px]">
          <div className="flex"><span className="w-[58px]">Relleno:</span><span>N/D</span></div>
          <div className="flex"><span className="w-[58px]">Trazo:</span><span>N/D</span></div>
        </div>
        <span className="w-[18px] text-[#555] text-[14.5px]">O:</span>
        <Spin value="96" w="w-[105px]" disabled btn="w-[29px]" h="h-[31px]" />
        <div className="ml-[4px] w-px h-[34px] bg-[#dedcd9]" />
        <div className="w-[36px] flex justify-center">
          <I s={20}>
            <path d="M2 11c4-5 16-5 20 0-4 6-16 6-20 0z" fill="#fff" stroke="#111" strokeWidth="1.5" />
            <circle cx="12" cy="11" r="4.5" fill="#111" />
            <path d="M3 7L1 5M7 4L6 2M12 3V1M17 4l1-2M21 7l2-2" stroke="#111" strokeWidth="1.2" />
            <path d="M4 16c4 4 12 4 16 0" fill="none" stroke="#555" />
          </I>
        </div>
        <div className="w-[24px] flex justify-center"><LockOpen s={21} /></div>
        <div className="ml-[3px] w-[75px] h-[31px] rounded-[5px] border border-[#b6b4b0] bg-gradient-to-b from-[#fafafa] to-[#ecebe9] flex items-center justify-center gap-[5px] font-bold text-[12.5px]">
          •Capa 1
          <svg width="9" height="6"><path d="M0 0h9L4.5 6z" fill="#222" /></svg>
        </div>
        <span className="ml-[3px] w-[1192px] whitespace-nowrap text-[14.9px]">No se han seleccionado objetos. Haga clic, Mayús+clic o arrastre para seleccionar los objetos.</span>
        <div className="w-[373px] shrink-0 h-[34px] flex items-center border-l border-[#dedcd9] text-[14.5px]">
          <div className="ml-[12px] w-[69px] flex flex-col leading-[17px]">
            <div className="flex justify-between"><span>X:</span><span>162,25</span></div>
            <div className="flex justify-between"><span>Y:</span><span>124,99</span></div>
          </div>
          <span className="ml-[11px] w-[22px]">Z:</span>
          <Spin value="50%" w="w-[102px]" btn="w-[21px]" center h="h-[31px]" />
          <span className="ml-[11px] w-[25px]">R:</span>
          <Spin value="0,00°" w="w-[108px]" btn="w-[23px]" center h="h-[31px]" />
        </div>
      </div>
    </div>
  );
}
